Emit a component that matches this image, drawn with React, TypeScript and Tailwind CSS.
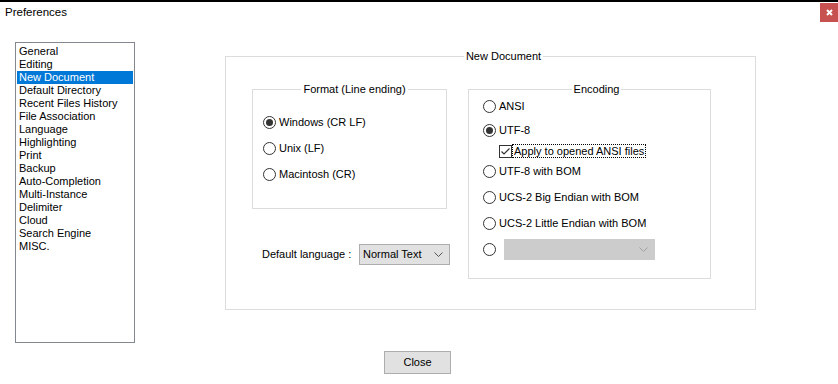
import React from "react";

const pages = [
  "General",
  "Editing",
  "New Document",
  "Default Directory",
  "Recent Files History",
  "File Association",
  "Language",
  "Highlighting",
  "Print",
  "Backup",
  "Auto-Completion",
  "Multi-Instance",
  "Delimiter",
  "Cloud",
  "Search Engine",
  "MISC.",
];

function Radio({ checked = false }: { checked?: boolean }) {
  return (
    <span className="w-[13px] h-[13px] shrink-0 rounded-full border border-[#333333] bg-white flex items-center justify-center">
      {checked && <span className="w-[7px] h-[7px] rounded-full bg-[#333333]" />}
    </span>
  );
}

function Chevron({ color = "#555555" }: { color?: string }) {
  return (
    <svg width="9" height="5" viewBox="0 0 9 5" className="shrink-0">
      <path d="M0.5 0.5 L4.5 4.5 L8.5 0.5" fill="none" stroke={color} strokeWidth="1" />
    </svg>
  );
}

function RadioRow({ label, checked, h }: { label: string; checked?: boolean; h: string }) {
  return (
    <div className={`flex items-center gap-[3px] ${h}`}>
      <Radio checked={checked} />
      <span>{label}</span>
    </div>
  );
}

export default function App() {
  return (
    <div
      className="w-[838px] h-[384px] bg-white border-t-2 border-black flex flex-col text-[11px] leading-[13px] text-black overflow-hidden"
      style={{ fontFamily: '"Liberation Sans", Arial, sans-serif' }}
    >
      {/* title bar */}
      <div className="h-[21px] flex items-start justify-between">
        <span className="ml-[5px] mt-[4px] text-[11.5px]">Preferences</span>
        <div className="mt-[1px] w-[18px] h-[19px] bg-[#c75050] flex items-center justify-center">
          <svg width="7" height="7" viewBox="0 0 7 7">
            <path d="M1 1 L6 6 M6 1 L1 6" stroke="white" strokeWidth="2" />
          </svg>
        </div>
      </div>

      <div className="flex items-start">
        {/* page list */}
        <div className="ml-[15px] mt-[19px] w-[120px] h-[301px] border border-[#828790] pt-[2px] px-[1px]">
          {pages.map((p) => (
            <div
              key={p}
              className={`h-[13px] pl-[2px] whitespace-nowrap ${
                p === "New Document" ? "bg-[#0078d7] text-white" : ""
              }`}
            >
              {p}
            </div>
          ))}
        </div>

        {/* New Document group */}
        <fieldset className="ml-[90px] mt-[27px] w-[531px] border border-[#dcdcdc] pl-[26px] pt-[20px] pb-[30px] flex gap-[18px]">
          <legend className="mx-auto px-[2px]">New Document</legend>

          <div className="flex flex-col">
            <fieldset className="w-[195px] border border-[#dcdcdc] pl-[10px] pt-[13px] pb-[21px]">
              <legend className="mx-auto px-[2px]">Format (Line ending)</legend>
              <RadioRow label="Windows (CR LF)" checked h="h-[26px]" />
              <RadioRow label="Unix (LF)" h="h-[26px]" />
              <RadioRow label="Macintosh (CR)" h="h-[26px]" />
            </fieldset>

            <div className="mt-[35px] ml-[10px] flex items-center">
              <span className="w-[97px]">Default language :</span>
              <div className="w-[91px] h-[21px] border border-[#adadad] bg-[#e1e1e1] flex items-center justify-between pl-[3px] pr-[6px]">
                <span>Normal Text</span>
                <Chevron />
              </div>
            </div>
          </div>

          <fieldset className="w-[243px] border border-[#dcdcdc] pl-[14px] pb-[16px]">
            <legend className="mx-auto px-[2px]">Encoding</legend>
            <RadioRow label="ANSI" h="h-[20px]" />
            <RadioRow label="UTF-8" checked h="h-[28px]" />
            <div className="h-[14px] flex items-center pl-[16px]">
              <span className="w-[13px] h-[13px] border border-[#333333] bg-white flex items-center justify-center shrink-0">
                <svg width="11" height="11" viewBox="0 0 11 11">
                  <path d="M1.5 5.5 L4 8 L9.5 2.5" fill="none" stroke="#333333" strokeWidth="1.2" />
                </svg>
              </span>
              <span className="border border-dotted border-black px-[1px] leading-[12px]">
                Apply to opened ANSI files
              </span>
            </div>
            <RadioRow label="UTF-8 with BOM" h="h-[26px]" />
            <RadioRow label="UCS-2 Big Endian with BOM" h="h-[26px]" />
            <RadioRow label="UCS-2 Little Endian with BOM" h="h-[26px]" />
            <div className="h-[26px] flex items-center gap-[8px]">
              <Radio />
              <div className="w-[151px] h-[21px] border border-[#cccccc] bg-[#cccccc] flex items-center justify-end pr-[6px]">
                <Chevron color="#a0a0a0" />
              </div>
            </div>
          </fieldset>
        </fieldset>
      </div>

      <div className="mt-[8px] ml-[384px]">
        <button className="w-[67px] h-[23px] border border-[#adadad] bg-[#e1e1e1] text-[11px]">
          Close
        </button>
      </div>
    </div>
  );
}
